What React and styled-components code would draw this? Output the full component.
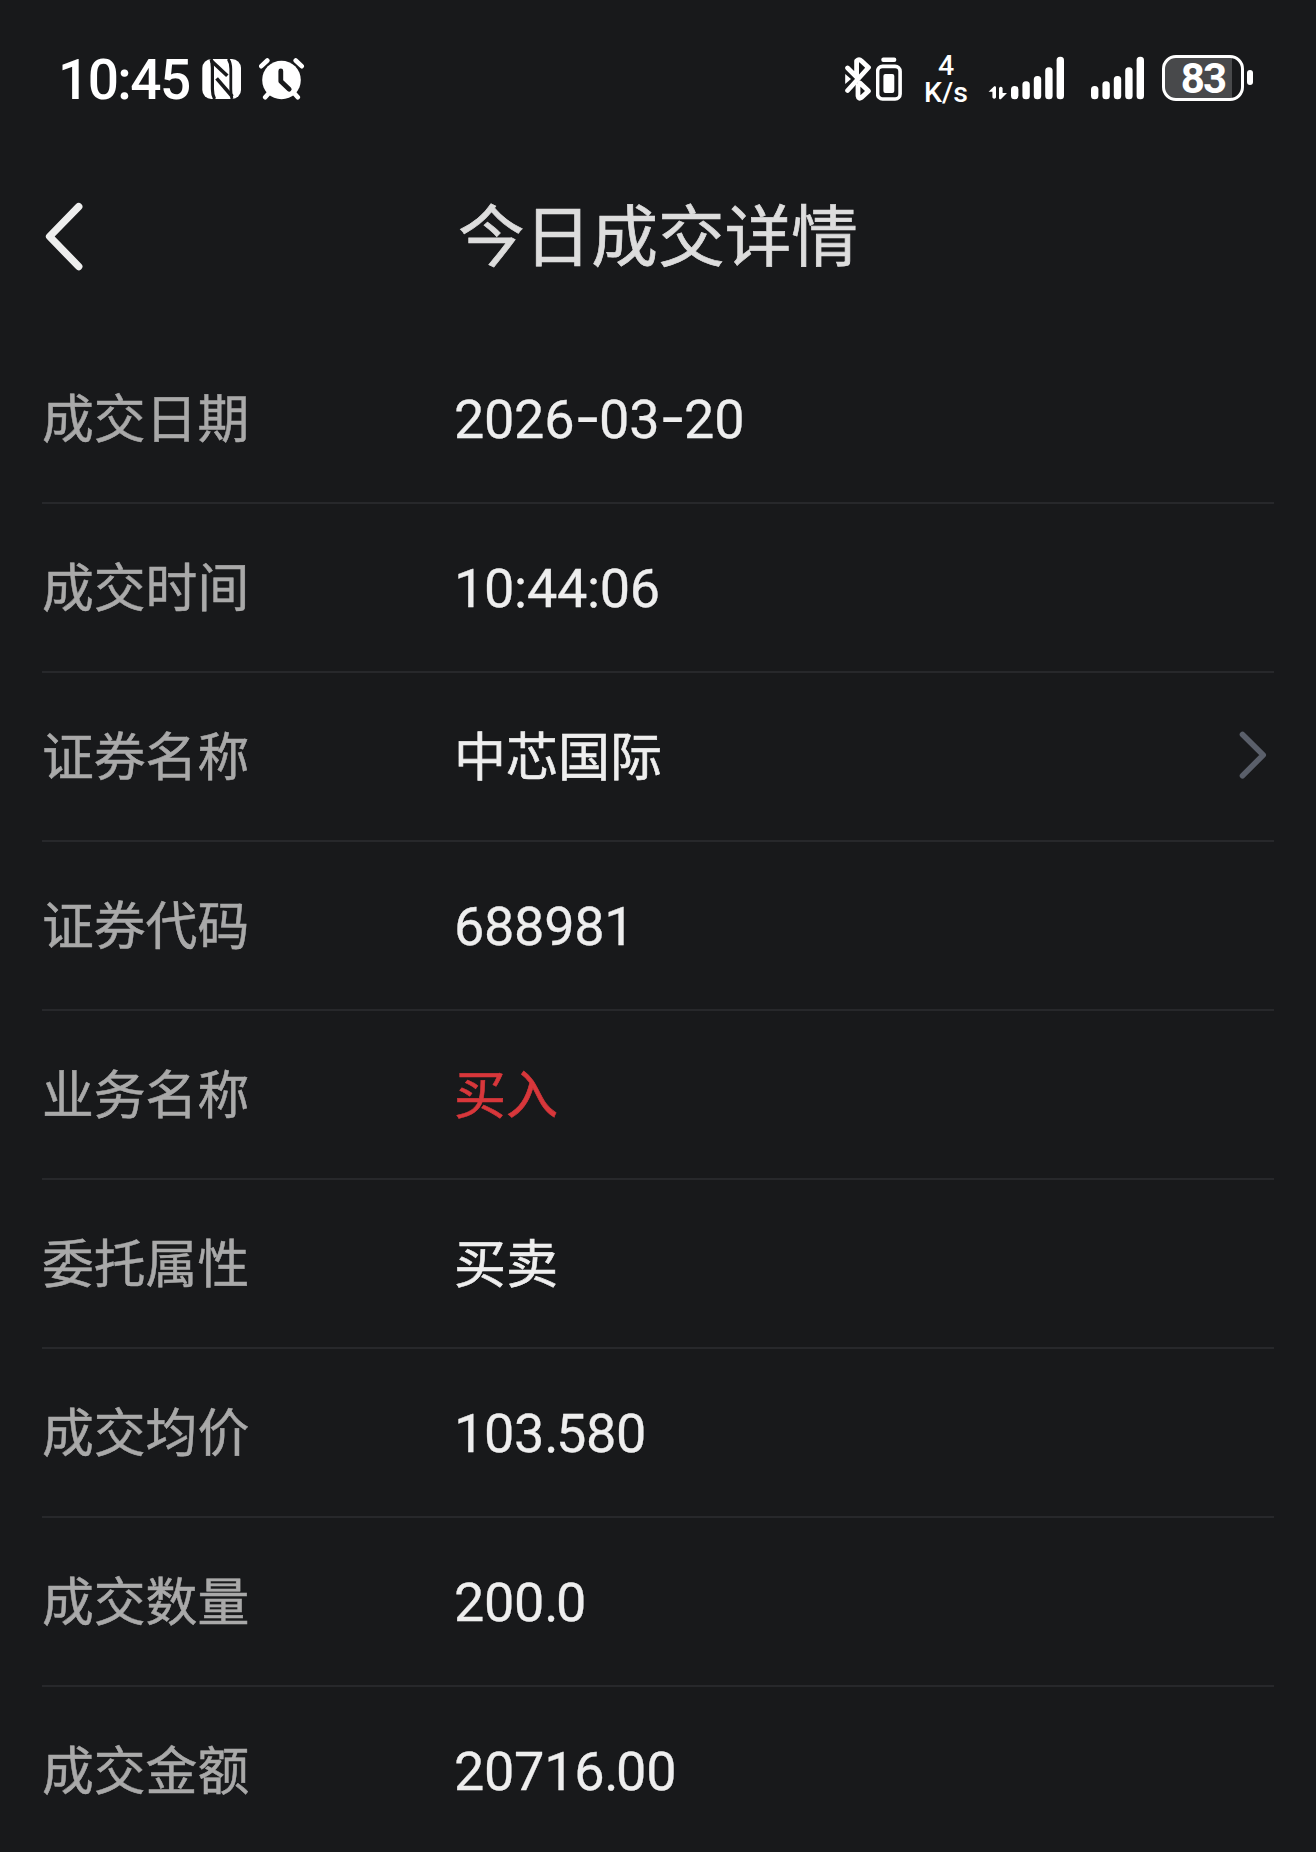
import React from 'react';
import styled, {createGlobalStyle} from 'styled-components';

const rows = [
    {label: '成交日期', value: '2026-03-20', number: true},
    {label: '成交时间', value: '10:44:06', number: true},
    {label: '证券名称', value: '中芯国际', link: true},
    {label: '证券代码', value: '688981', number: true},
    {label: '业务名称', value: '买入', color: '#d8373b'},
    {label: '委托属性', value: '买卖'},
    {label: '成交均价', value: '103.580', number: true},
    {label: '成交数量', value: '200.0', number: true},
    {label: '成交金额', value: '20716.00', number: true},
]

const NfcIcon = () => (
    <svg width="40" height="42" viewBox="0 0 40 42">
        <rect x="0.3" y="1" width="38.7" height="40" rx="9" fill="#fff"/>
        <g fill="none" stroke="#18191b">
            <path d="M9 1Q10.4 4 10.4 10V31Q10.4 37 12.6 41" strokeWidth="3.2"/>
            <path d="M9.5 3L25.3 17.7" strokeWidth="3.6"/>
            <path d="M14.6 20.4L30.3 38.5" strokeWidth="3.6"/>
            <path d="M26.2 1Q28.8 5 28.8 11V31Q28.8 37 30 41" strokeWidth="2.8"/>
        </g>
    </svg>
)

const AlarmIcon = () => (
    <svg width="46" height="44" viewBox="0 0 46 44">
        <circle cx="22.5" cy="23" r="19.3" fill="#fff"/>
        <g fill="none" stroke="#fff" strokeWidth="4.6" strokeLinecap="round">
            <path d="M2.3 9.2L8.3 3.5M36.7 3.5L42.7 9.2M10 36L6.2 40.3M35 36L38.8 40.3"/>
        </g>
        <path d="M21.8 14V24.3L30.2 32.2" fill="none" stroke="#18191b" strokeWidth="4.8" strokeLinecap="round" strokeLinejoin="round"/>
    </svg>
)

const BluetoothIcon = () => (
    <svg width="28" height="46" viewBox="0 0 28 46">
        <g fill="none" stroke="#fff" strokeWidth="4.8" strokeLinecap="round" strokeLinejoin="round">
            <path d="M2.6 12L11.6 21V5Q14 2.6 16.5 5L23.5 11.5L2.6 34.5"/>
            <path d="M15 27L23.5 35L16.5 41.5Q13.5 43.5 13 40V29.5"/>
        </g>
        <path d="M0.2 18L6 23L0.2 28Z" fill="#fff"/>
    </svg>
)

const DeviceBatteryIcon = () => (
    <svg width="27" height="45" viewBox="0 0 27 45">
        <rect x="5.3" y="0.5" width="15" height="4.6" rx="2" fill="#fff"/>
        <rect x="1.6" y="9.4" width="22.5" height="32.6" rx="5" fill="none" stroke="#fff" strokeWidth="3.6"/>
        <rect x="7.4" y="17" width="10.9" height="19" rx="2" fill="#fff"/>
    </svg>
)

const DataIcon = () => (
    <svg width="20" height="14" viewBox="0 0 20 14">
        <path d="M0.3 6L6.2 0.3Q8 -0.2 8 1.5V11.5Q6.3 14 4.4 11.5V5.8H0.5ZM11 2Q12.8 -0.5 14.6 2V7H19L12.8 13.2Q11 13.8 11 12Z" fill="#fff"/>
    </svg>
)

const SignalIcon = () => (
    <svg width="54" height="44" viewBox="0 0 54 44">
        <g fill="#fff">
            <rect x="0" y="30" width="7.4" height="13.3" rx="3.5"/>
            <rect x="11.4" y="25.3" width="7.4" height="18" rx="3.5"/>
            <rect x="22.8" y="20" width="7.4" height="23.3" rx="3.5"/>
            <rect x="34.2" y="11.3" width="7.4" height="32" rx="3.5"/>
            <rect x="45.6" y="0.8" width="7.4" height="42.5" rx="3.5"/>
        </g>
    </svg>
)

const StatusBar = () => {
    return(
        <StatusWrapper>
            <Clock>10:45</Clock>
            <IconSlot $left={13} $top={58}><NfcIcon/></IconSlot>
            <IconSlot $left={17} $top={57}><AlarmIcon/></IconSlot>
            <Spacer/>
            <IconSlot $top={56}><BluetoothIcon/></IconSlot>
            <IconSlot $left={3} $top={57}><DeviceBatteryIcon/></IconSlot>
            <Speed>{'4\nK/s'}</Speed>
            <IconSlot $left={18} $top={86}><DataIcon/></IconSlot>
            <IconSlot $left={3} $top={56}><SignalIcon/></IconSlot>
            <IconSlot $left={26} $top={56}><SignalIcon/></IconSlot>
            <Battery>83</Battery>
            <BatteryTip/>
        </StatusWrapper>
    )
}

const Digits = ({text}) => {
    return(
        <NumberValue>
            {text.split(/([-.])/).map((part, i) => {
                if (part === '-') return <Dash key={i}>-</Dash>
                if (part === '.') return <Point key={i}>.</Point>
                return part
            })}
        </NumberValue>
    )
}

const App = () => {
    return(
        <Page>
            <GlobalStyle/>
            <StatusBar/>
            <Header>
                <BackButton type="button" aria-label="back">
                    <svg width="40" height="70" viewBox="0 0 40 70">
                        <path d="M34.7 5.7L5.6 35.5L34.7 65.5" fill="none" stroke="#eee" strokeWidth="7.4" strokeLinecap="round" strokeLinejoin="round"/>
                    </svg>
                </BackButton>
                <Title>今日成交详情</Title>
            </Header>
            <List>
                {rows.map((row) => (
                    <Row key={row.label}>
                        <Label>{row.label}</Label>
                        {row.number
                            ? <Digits text={row.value}/>
                            : <Value $color={row.color}>{row.value}</Value>
                        }
                        {row.link && (
                            <Arrow width="30" height="50" viewBox="0 0 30 50">
                                <path d="M4.5 4.4L25.2 25L4.5 45.7"/>
                            </Arrow>
                        )}
                    </Row>
                ))}
            </List>
        </Page>
    )
}

const GlobalStyle = createGlobalStyle`
    * {
        box-sizing: border-box;
    }

    body {
        margin: 0;
        background: #18191b;
        overflow: hidden;
    }
`

const Page = styled.div`
    width: 1316px;
    height: 1852px;
    overflow: hidden;
    background: #18191b;
    font-family: "Noto Sans CJK SC", sans-serif;

    svg {
        display: block;
        flex: none;
    }
`

const StatusWrapper = styled.div`
    display: flex;
    align-items: flex-start;
    height: 157px;
    padding: 0 63px 0 58px;
    color: #fff;
`

const Clock = styled.div`
    width: 131px;
    padding-top: 47px;
    font: 500 55px/66px Roboto, sans-serif;
    letter-spacing: -1.6px;
    white-space: nowrap;
`

const IconSlot = styled.div`
    flex: none;
    margin-left: ${({$left}) => $left || 0}px;
    padding-top: ${({$top}) => $top}px;
`

const Spacer = styled.div`
    flex: 1;
`

const Speed = styled.div`
    width: 48px;
    margin-left: 19px;
    padding-top: 53px;
    font: 500 28.5px/26.5px Roboto, sans-serif;
    text-align: center;
    white-space: pre;
`

const Battery = styled.div`
    width: 82px;
    height: 46px;
    margin: 55px 0 0 17px;
    border: 3.5px solid #fff;
    border-radius: 14px;
    background: linear-gradient(90deg, #48494b 67px, transparent 67px);
    font: 700 42px/42px Roboto, sans-serif;
    letter-spacing: -1.8px;
    text-align: center;
`

const BatteryTip = styled.div`
    width: 6px;
    height: 15px;
    margin: 70px 0 0 3px;
    border-radius: 3px;
    background: #fff;
`

const Header = styled.header`
    display: grid;
    grid-template-columns: 1fr auto 1fr;
    align-items: center;
    height: 178px;
    padding: 0 44px 20px;
`

const BackButton = styled.button`
    justify-self: start;
    padding: 0;
    border: none;
    background: none;
`

const Title = styled.h1`
    margin: 0;
    padding-bottom: 8px;
    color: #ddd;
    font-size: 66.7px;
    font-weight: 400;
    line-height: 90px;
    -webkit-text-stroke: 0.7px;
`

const List = styled.div`
    padding: 0 42px;
`

const Row = styled.div`
    display: flex;
    align-items: center;
    height: 169px;
    border-bottom: 2px solid #27282b;
`

const Label = styled.div`
    width: 412px;
    padding-bottom: 6px;
    color: #a9a9a9;
    font-size: 51.8px;
    line-height: 76px;
    -webkit-text-stroke: 0.5px;
`

const Value = styled.div`
    flex: 1;
    padding-bottom: 6px;
    color: ${({$color}) => $color || '#eee'};
    font-size: 52px;
    line-height: 76px;
    -webkit-text-stroke: 0.6px;
`

const NumberValue = styled.div`
    flex: 1;
    padding-top: 3px;
    color: #eee;
    font-family: Roboto, sans-serif;
    font-size: 54px;
    letter-spacing: -0.3px;
    line-height: 76px;
    -webkit-text-stroke: 0.3px;
`

const Dash = styled.span`
    font-family: Inter, sans-serif;
    font-size: 58px;
    line-height: 0;
    letter-spacing: -1.8px;
    -webkit-text-stroke: 0;
`

const Point = styled.span`
    letter-spacing: -2.4px;
`

const Arrow = styled.svg`
    margin: 0 6px 4px 0;
    fill: none;
    stroke: #5a5f6a;
    stroke-width: 5.6;
    stroke-linecap: round;
    stroke-linejoin: round;
`

export default App
